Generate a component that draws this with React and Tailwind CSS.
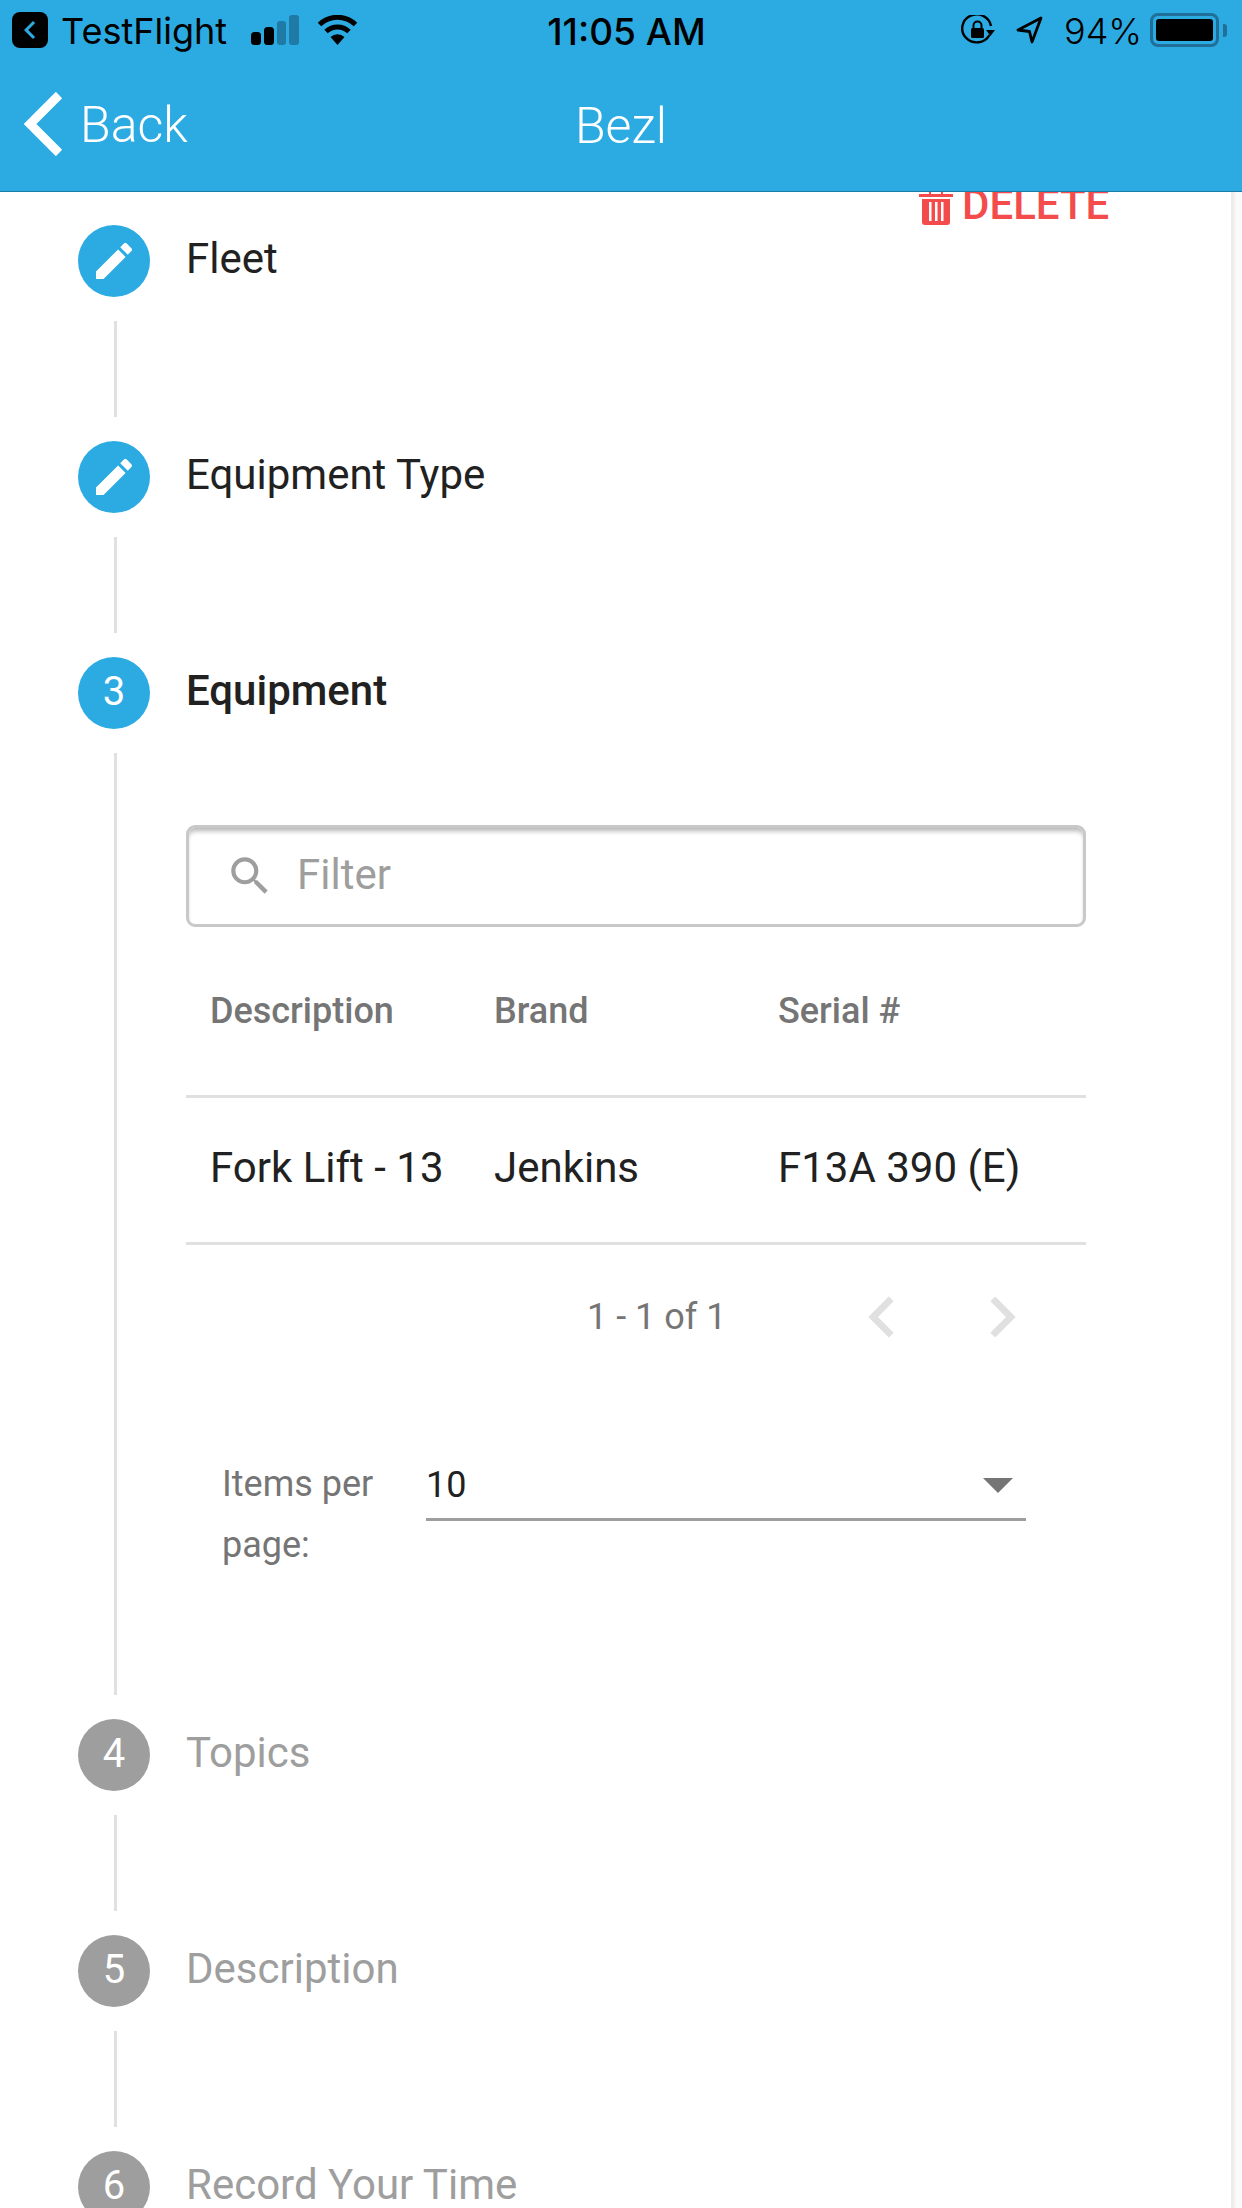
import { MdEdit, MdSearch, MdChevronLeft, MdChevronRight } from "react-icons/md";

// status bar glyphs that the icon packs don't carry
const SignalBars = () => (
    <svg width="48" height="30" viewBox="0 0 48 30" className="ml-[24px]">
        <rect x="0" y="17" width="10" height="13" rx="3.5" fill="#000" />
        <rect x="13" y="12" width="10" height="18" rx="3.5" fill="#000" />
        <rect x="26" y="6" width="9" height="24" rx="3" fill="#1f7aa6" />
        <rect x="38" y="0" width="10" height="30" rx="3" fill="#1f7aa6" />
    </svg>
);

const Wifi = () => (
    <svg width="41" height="30" viewBox="0 0 41 30" className="ml-[18px]">
        <path d="M20.5 30 L13.5 22 A10.5 10.5 0 0 1 27.5 22 Z" fill="#000" />
        <path d="M9 16.5 A17 17 0 0 1 32 16.5" fill="none" stroke="#000" strokeWidth="5" />
        <path d="M2.5 9.5 A26 26 0 0 1 38.5 9.5" fill="none" stroke="#000" strokeWidth="5" />
    </svg>
);

const RotationLock = () => (
    <svg width="34" height="31" viewBox="0 0 34 31">
        <path d="M28.5 20 A14.5 14 0 1 1 30 11" fill="none" stroke="#000" strokeWidth="2.4" />
        <path d="M25 15 L34 15 L29.5 21 Z" fill="#000" />
        <rect x="10" y="13" width="13" height="10" rx="1.5" fill="#000" />
        <path d="M12.5 13 V10.5 A4 4 0 0 1 20.5 10.5 V13" fill="none" stroke="#000" strokeWidth="2" />
    </svg>
);

const LocationArrow = () => (
    <svg width="27" height="28" viewBox="0 0 27 28">
        <path d="M25 2 L2 14 L13.5 15.5 L16 26 Z" fill="none" stroke="#000" strokeWidth="2.8" strokeLinejoin="round" />
    </svg>
);

const Battery = () => (
    <div className="flex items-center ml-[8px]">
        <div className="w-[69px] h-[34px] rounded-[8px] border-[3px] border-[#1f6f98] p-[3px]">
            <div className="w-full h-full rounded-[3px] bg-black" />
        </div>
        <div className="w-[4px] h-[13px] ml-[4px] rounded-r-[3px] bg-[#1f6f98]" />
    </div>
);

const StatusBar = () => (
    <div className="h-[60px] flex items-center relative text-black font-['Inter',sans-serif]">
        <div className="w-[36px] h-[36px] ml-[12px] rounded-[8px] bg-black flex items-center justify-center">
            <MdChevronLeft className="text-[#2cabe3] text-[36px]" />
        </div>
        <span className="ml-[13px] pt-[2px] text-[36px] leading-none">TestFlight</span>
        <SignalBars />
        <Wifi />
        {/* clock stays centered on the bar */}
        <span className="absolute left-[536px] w-[181px] pt-[2px] text-center text-[37px] leading-none font-medium">
            11:05 AM
        </span>
        <div className="ml-auto mr-[15px] flex items-center">
            <RotationLock />
            <span className="ml-[21px] flex"><LocationArrow /></span>
            <span className="ml-[21px] pt-[2px] text-[36px] leading-none font-light">94%</span>
            <Battery />
        </div>
    </div>
);

const Header = () => (
    <div className="relative z-10 h-[192px] bg-[#2cabe3] border-b border-[#1c7ba6]">
        <StatusBar />
        <div className="relative h-[131px] flex items-center text-white font-['Roboto',sans-serif] font-light text-[50px] leading-none">
            <svg width="40" height="64" viewBox="0 0 40 64" className="ml-[24px] mb-[4px]">
                <path d="M35 3 L6 32 L35 61" fill="none" stroke="#fff" strokeWidth="9" />
            </svg>
            <span className="ml-[16px] pb-[2px]">Back</span>
            <span className="absolute left-0 right-0 text-center">Bezl</span>
        </div>
    </div>
);

const TrashIcon = () => (
    <svg width="34" height="36" viewBox="0 0 34 36" className="mt-[5px]">
        <path d="M11 4 V2.5 A2.5 2.5 0 0 1 13.5 0 H20.5 A2.5 2.5 0 0 1 23 2.5 V4" fill="none" stroke="#f44c4c" strokeWidth="2" />
        <rect x="0" y="4" width="34" height="3" fill="#f44c4c" />
        <path d="M3 9 H31 V32 A3 3 0 0 1 28 35 H6 A3 3 0 0 1 3 32 Z" fill="#f44c4c" />
        <rect x="10" y="12" width="2.5" height="19" fill="#fff" />
        <rect x="16" y="12" width="2.5" height="19" fill="#fff" />
        <rect x="22" y="12" width="2.5" height="19" fill="#fff" />
    </svg>
);

const Step = ({ mark, label, state }) => (
    <div className="h-[72px] flex items-center">
        <div
            className={`w-[72px] h-[72px] ml-[78px] rounded-full flex items-center justify-center text-white text-[40px] ${
                state === "done" ? "" : "pb-[3px]"
            } ${state === "todo" ? "bg-[#9e9e9e]" : "bg-[#2cabe3]"}`}
        >
            {state === "done" ? <MdEdit className="text-[48px]" /> : mark}
        </div>
        <span
            className={`ml-[36px] pb-[5px] text-[42px] leading-none ${
                state === "todo" ? "text-[#9e9e9e]" : "text-[#212121]"
            } ${state === "active" ? "font-medium" : ""}`}
        >
            {label}
        </span>
    </div>
);

const Connector = () => <div className="ml-[114px] my-[24px] h-[96px] border-l-[3px] border-[#e0e0e0]" />;

const EquipmentPanel = () => (
    <div className="ml-[114px] my-[24px] h-[942px] border-l-[3px] border-[#e0e0e0] pl-[69px] pt-[72px]">
        <div className="w-[900px]">
            <div className="h-[102px] rounded-[9px] border-[3px] border-[#c8c8c8] shadow-[inset_0_5px_5px_-2px_#b5b5b5] flex items-center pl-[36px] text-[#9e9e9e]">
                <MdSearch className="text-[50px]" />
                <span className="ml-[22px] pb-[3px] text-[42px] leading-none">Filter</span>
            </div>

            <div className="h-[171px] grid grid-cols-[284px_284px_1fr] items-center pl-[24px] border-b-[3px] border-[#e0e0e0] text-[#757575] text-[36px] font-medium">
                <span>Description</span>
                <span>Brand</span>
                <span>Serial #</span>
            </div>
            <div className="h-[147px] pb-[5px] grid grid-cols-[284px_284px_1fr] items-center pl-[24px] border-b-[3px] border-[#e0e0e0] text-[#212121] text-[42px]">
                <span>Fork Lift - 13</span>
                <span>Jenkins</span>
                <span>F13A 390 (E)</span>
            </div>

            <div className="h-[144px] flex items-center pl-[401px] text-[#757575] text-[36px]">
                <span className="w-[254px]">1 - 1 of 1</span>
                <MdChevronLeft className="text-[#e0e0e0] text-[82px]" />
                <MdChevronRight className="ml-[38px] text-[#e0e0e0] text-[82px]" />
            </div>

            <div className="mt-[71px] flex pl-[36px]">
                <div className="w-[204px] -mt-[6px] text-[#757575] text-[36px] leading-[61px]">
                    Items per
                    <br />
                    page:
                </div>
                <div className="w-[600px] h-[61px] flex items-center justify-between pr-[12px] pb-[8px] border-b-[3px] border-[#9e9e9e] text-[#212121] text-[36px]">
                    <span>10</span>
                    <span className="w-0 h-0 mr-[1px] border-x-[15px] border-t-[15px] border-x-transparent border-t-[#757575]" />
                </div>
            </div>
        </div>
    </div>
);

export default function App() {
    return (
        <div className="w-[1242px] h-[2208px] overflow-hidden bg-[#fafafa] font-['Roboto',sans-serif]">
            <Header />
            <div className="relative w-[1234px] h-[2016px] bg-white border-r-[3px] border-[#ededed] shadow-[1px_0_2px_#f0f0f0] pt-[33px]">
                {/* sits under the app bar, so its top edge is cut off */}
                <div className="absolute left-[919px] top-[-8px] flex items-center gap-[9px] text-[#f44c4c] text-[42px] font-medium leading-none">
                    <TrashIcon />
                    <span>DELETE</span>
                </div>

                <Step label="Fleet" state="done" />
                <Connector />
                <Step label="Equipment Type" state="done" />
                <Connector />
                <Step mark="3" label="Equipment" state="active" />
                <EquipmentPanel />
                <Step mark="4" label="Topics" state="todo" />
                <Connector />
                <Step mark="5" label="Description" state="todo" />
                <Connector />
                <Step mark="6" label="Record Your Time" state="todo" />
            </div>
        </div>
    );
}
